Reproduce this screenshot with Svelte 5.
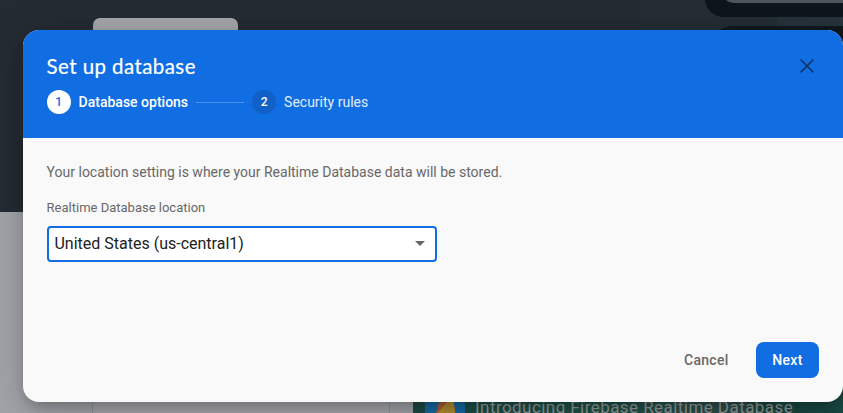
<script>
  let location = $state('United States (us-central1)');
</script>

<div class="page">
  <div class="hero">
    <div class="tab"></div>
    <svg class="art" width="203" height="40" viewBox="0 0 203 40" aria-hidden="true">
      <path d="M0 0H203V40H0z" fill="#242d34" />
      <path d="M136 16H203V30H139z" fill="#27323a" />
      <path d="M65 0C66 10 74 17 84 17H203V0z" fill="#0d151d" />
      <path d="M86 0C88 2 91 3 95 3H203V0z" fill="#50565d" />
      <path d="M80 30C84 27 88 26 93 26H203V40H80z" fill="#10181f" />
    </svg>
  </div>
  <div class="lower">
    <div class="card"></div>
    <div class="video">
      <svg width="40" height="40" viewBox="0 0 40 40" aria-hidden="true">
        <circle cx="20" cy="20" r="22" fill="#1668a0" />
        <path d="M8 40L17 10L23 16L28 11L32 40z" fill="#b08a30" />
        <path d="M10 31L17 8L24 15z" fill="#aa5a30" />
      </svg>
      <span>Introducing Firebase Realtime Database</span>
    </div>
  </div>

  <div class="dialog" role="dialog" aria-labelledby="title">
    <header>
      <div class="heading">
        <h1 id="title">Set up database</h1>
        <button class="close" aria-label="Close">
          <svg width="14" height="14" viewBox="0 0 14 14" fill="none" stroke="#0c3470" stroke-width="1.7">
            <path d="M.6.6L13.4 13.4M13.4.6L.6 13.4" />
          </svg>
        </button>
      </div>
      <div class="steps">
        <span class="number active">1</span>
        <span class="label current">Database options</span>
        <span class="line"></span>
        <span class="number">2</span>
        <span class="label next-label">Security rules</span>
      </div>
    </header>
    <main>
      <p>Your location setting is where your Realtime Database data will be stored.</p>
      <div class="field-label">Realtime Database location</div>
      <div class="select" role="combobox" aria-expanded="false" aria-controls="title" tabindex="0">
        <span>{location}</span>
        <svg width="10" height="5" viewBox="0 0 10 5" aria-hidden="true"><path d="M0 0H10L5 5z" fill="#666" /></svg>
      </div>
      <footer>
        <button class="cancel">Cancel</button>
        <button class="next">Next</button>
      </footer>
    </main>
  </div>
</div>

<style>
  :global(body) { margin: 0; overflow: hidden; }
  .page {
    position: relative;
    width: 843px;
    height: 413px;
    overflow: hidden;
    background: #a0a3a8;
    font-family: Roboto, sans-serif;
  }
  .hero { height: 212px; background: #242b32; position: relative; }
  .tab {
    position: absolute;
    left: 93px;
    top: 18px;
    width: 145px;
    height: 30px;
    border-radius: 7px;
    background: #a5a6a9;
  }
  .art { position: absolute; right: 0; top: 0; }
  .lower { height: 201px; position: relative; }
  .card {
    position: absolute;
    left: 92px;
    top: 0;
    width: 296px;
    height: 220px;
    background: #a5a5a8;
    border: 1px solid #8d9094;
    border-width: 0 1px;
  }
  .video {
    position: absolute;
    left: 413px;
    top: 173px;
    width: 430px;
    height: 56px;
    box-sizing: border-box;
    padding-left: 12px;
    display: flex;
    gap: 10px;
    background: linear-gradient(90deg, #1c4b45, #1c5147 45%, #2f4d49 74%, #184640 82%, #194942);
    color: #929898;
    font-size: 17px;
    line-height: 44px;
    white-space: nowrap;
  }
  .video svg { flex: none; }
  .video span { letter-spacing: 0.44px; }
  .dialog {
    position: absolute;
    left: 23px;
    top: 30px;
    width: 820px;
    height: 372px;
    border-radius: 16px;
    overflow: hidden;
    background: #f9f9f9;
    display: flex;
    flex-direction: column;
    box-shadow: 0 11px 15px -7px rgba(0, 0, 0, 0.2), 0 9px 46px 8px rgba(0, 0, 0, 0.08), 0 4px 18px rgba(0, 0, 0, 0.14);
  }
  header {
    height: 108px;
    flex: none;
    box-sizing: border-box;
    padding: 23px 29.5px 0 23.6px;
    background: #106de2;
    color: #fff;
  }
  .heading { display: flex; justify-content: space-between; height: 37px; }
  h1 {
    margin: 0;
    font: 400 20.5px/26px Lato, sans-serif;
    letter-spacing: 0.42px;
    -webkit-text-stroke: 0.2px #fff;
  }
  button { border: 0; font: inherit; padding: 0; background: none; }
  .close { width: 14px; height: 14px; margin-top: 6px; display: flex; }
  .steps { display: flex; align-items: center; height: 24px; }
  .number {
    width: 24px;
    height: 24px;
    border-radius: 50%;
    background: #1160c7;
    display: grid;
    place-items: center;
    font-size: 12px;
    font-weight: 500;
  }
  .number.active { background: #fff; color: #106de2; }
  .label { font-size: 14px; line-height: 20px; margin-left: 8px; white-space: nowrap; }
  .current { font-weight: 500; }
  .next-label { color: #e2edfc; }
  .line { width: 48px; height: 1px; margin: 0 8px; background: #4b91e9; }
  main { flex: 1; display: flex; flex-direction: column; padding: 24px 24px 24px 23.6px; color: #686868; }
  p { margin: 0; font-size: 14px; line-height: 20px; white-space: nowrap; }
  .field-label { margin-top: 18px; font-size: 13px; line-height: 16px; }
  .select {
    box-sizing: border-box;
    width: 390px;
    height: 36px;
    margin: 10px 0 0 0.4px;
    padding: 0 10px 0 5.5px;
    border: 2px solid #106de2;
    border-radius: 4px;
    background: #fff;
    display: flex;
    align-items: center;
    justify-content: space-between;
    color: #212121;
    font-size: 16px;
  }
  .select span { padding-bottom: 1px; line-height: 19px; }
  .select svg { margin-bottom: 1px; }
  footer {
    margin-top: auto;
    display: flex;
    justify-content: flex-end;
    gap: 12px;
    font-size: 14px;
    font-weight: 500;
  }
  footer button { height: 36px; letter-spacing: 0.3px; }
  .cancel { padding: 0 15.4px 0 16px; color: #686868; }
  .next { width: 63px; border-radius: 8px; background: #106de2; color: #fff; }
</style>
